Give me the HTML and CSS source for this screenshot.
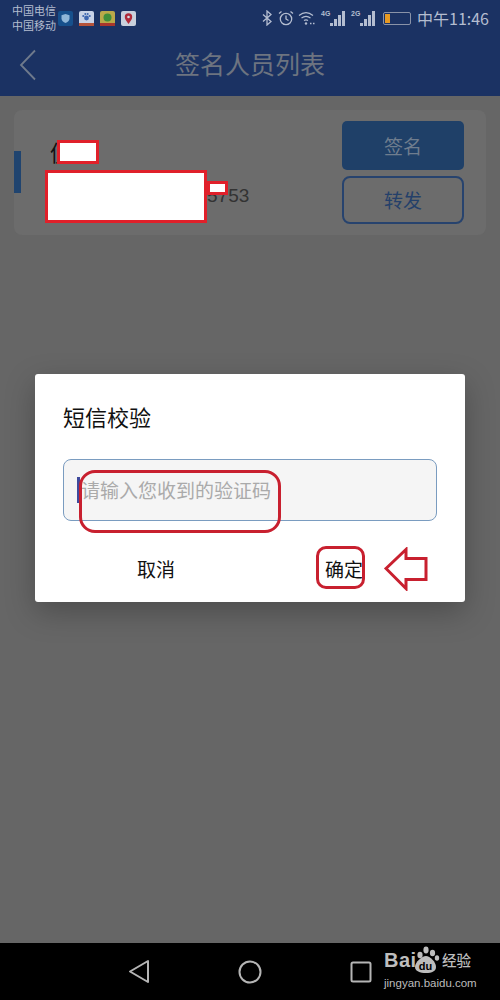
FILE: index.html
```html
<!DOCTYPE html>
<html lang="zh-CN">
<head>
  <meta charset="UTF-8" />
  <meta name="viewport" content="width=device-width, initial-scale=1.0" />
  <title>签名人员列表</title>
  <link rel="stylesheet" href="styles.css">
</head>
<body>
  <div class="phone">
    <header class="top-bar">
      <div class="status-bar">
        <div class="carrier"><span>中国电信</span><span>中国移动</span></div>
        <div class="app-icons">
          <svg width="15" height="15" viewBox="0 0 15 15"><rect width="15" height="15" rx="2" fill="#17508c"/><path d="M7.500 3l4 1.300v3.200c0 2.300-1.800 3.700-4 4.500-2.200-.8-4-2.200-4-4.500V4.300z" fill="#8fb6d8"/></svg>
          <svg width="15" height="15" viewBox="0 0 15 15"><rect width="15" height="15" rx="2" fill="#c9d3e6"/><circle cx="7.500" cy="7" r="2.400" fill="#3e66b0"/><circle cx="4.300" cy="5" r="1.100" fill="#3e66b0"/><circle cx="10.700" cy="5" r="1.100" fill="#3e66b0"/><circle cx="6.300" cy="3" r="1" fill="#3e66b0"/><circle cx="8.700" cy="3" r="1" fill="#3e66b0"/><rect y="12" width="15" height="3" fill="#b5533a"/></svg>
          <svg width="15" height="15" viewBox="0 0 15 15"><rect width="15" height="15" rx="2" fill="#b9a94a"/><circle cx="7.500" cy="6.500" r="4" fill="#3f8f3a"/><rect y="12" width="15" height="3" fill="#a8362c"/></svg>
          <svg width="15" height="15" viewBox="0 0 15 15"><rect width="15" height="15" rx="2" fill="#c9d0dc"/><path d="M7.500 13C5.500 10 3.800 8.300 3.800 6a3.700 3.700 0 0 1 7.400 0c0 2.300-1.700 4-3.700 7z" fill="#b02a3a"/><circle cx="7.500" cy="6" r="1.300" fill="#d8dce4"/></svg>
        </div>
        <div class="sys-icons">
          <svg width="10" height="16" viewBox="0 0 10 16" fill="none" stroke="#b4bdd0" stroke-width="1.300"><path d="M1 4.500l8 7-4 3.500V1l4 3.500-8 7"/></svg>
          <svg class="alarm" width="16" height="16" viewBox="0 0 16 16" fill="none" stroke="#b4bdd0" stroke-width="1.300"><circle cx="8" cy="9" r="5.700"/><path d="M8 5.500V9l2.500 1.500M1 3.500L3.500 1.500M15 3.500l-2.500-2"/></svg>
          <svg class="wifi" width="18" height="15" viewBox="0 0 18 15" fill="none" stroke="#b4bdd0" stroke-width="1.200"><path d="M1 4.500C5.500.8 10.500.8 15 4.500M3.500 7c3-2.300 6-2.300 9 0M6 9.500c1.500-1 2.500-1 4 0"/><circle cx="8" cy="12.500" r="1.200" fill="#b4bdd0" stroke="none"/><path d="M12 12.500h1.500M15 12.500h1.500" stroke-width="1.500"/></svg>
          <span class="signal"><small>4G</small><i class="b1"></i><i class="b2"></i><i class="b3"></i><i class="b4"></i></span>
          <span class="signal"><small>2G</small><i class="b1"></i><i class="b2"></i><i class="b3"></i><i class="b4"></i></span>
          <span class="battery"><i></i></span>
          <span class="clock">中午11:46</span>
        </div>
      </div>
      <div class="title-bar">
        <svg class="back" width="18" height="32" viewBox="0 0 18 32" fill="none" stroke="#6f7a8c" stroke-width="1.800"><path d="M16 1.500L2 16l14 14.500"/></svg>
        <h1>签名人员列表</h1>
      </div>
    </header>

    <main class="content">
      <section class="card">
        <div class="card-mark"></div>
        <div class="card-info">
          <div class="name">倪</div>
          <div class="phone-no">5753</div>
        </div>
        <div class="card-btns">
          <button class="btn btn-solid">签名</button>
          <button class="btn btn-line">转发</button>
        </div>
      </section>
    </main>

    <nav class="nav-bar">
      <svg width="22" height="25" viewBox="0 0 22 25" fill="none" stroke="#b5b5b5" stroke-width="2" stroke-linejoin="round"><path d="M20 2v21L2 12.500z"/></svg>
      <svg width="24" height="24" viewBox="0 0 24 24" fill="none" stroke="#b5b5b5" stroke-width="2"><circle cx="12" cy="12" r="10.500"/></svg>
      <svg width="22" height="22" viewBox="0 0 22 22" fill="none" stroke="#b5b5b5" stroke-width="2"><rect x="1.500" y="1.500" width="19" height="19" rx="1.500"/></svg>
    </nav>

    <!-- dialog over the dimmed page -->
    <div class="dialog">
      <h2>短信校验</h2>
      <div class="code-input"><span class="caret"></span><span class="hint">请输入您收到的验证码</span></div>
      <div class="dialog-btns">
        <button class="link-btn">取消</button>
        <button class="link-btn">确定</button>
      </div>
    </div>

    <!-- red marks drawn on the screenshot -->
    <div class="mask mask-name"></div>
    <div class="mask mask-info"></div>
    <div class="mask mask-tail"></div>
    <div class="ring ring-input"></div>
    <div class="ring ring-ok"></div>
    <svg class="arrow" width="44" height="44" viewBox="0 0 44 44" fill="#fff" stroke="#c8202f" stroke-width="3"><path d="M2 21.500L22 2.500v9h20v21H22v9z"/></svg>

    <div class="watermark">
      <div class="wm-top">
        <span class="wm-bai">Bai</span>
        <svg width="28" height="28" viewBox="0 0 28 28"><g fill="#bdbdbd"><ellipse cx="8" cy="9" rx="2.600" ry="3.200"/><ellipse cx="14" cy="4" rx="2.600" ry="3.400"/><ellipse cx="20.500" cy="7" rx="2.600" ry="3.200"/><ellipse cx="25" cy="12" rx="2.200" ry="2.700"/><path d="M14 10c4 0 10 6 10 11 0 4-4 6-10 6S3 25 3 21c0-5 7-11 11-11z"/></g><text x="13.500" y="24" class="wm-du">du</text></svg>
        <span class="wm-jy">经验</span>
      </div>
      <div class="wm-url">jingyan.baidu.com</div>
    </div>
  </div>
</body>
</html>
```

FILE: styles.css
```css
* {
  box-sizing: border-box;
}
body {
  margin: 0;
  font-family: "Noto Sans CJK SC", "Liberation Sans", sans-serif;
}
.phone {
  position: relative;
  width: 500px;
  height: 1000px;
  display: flex;
  flex-direction: column;
  overflow: hidden;
  background: #666;
}
/* Top bar */
.top-bar {
  height: 96px;
  background: #1b3263;
  display: flex;
  flex-direction: column;
}
.status-bar {
  height: 34px;
  padding: 2px 11px 0 12px;
  display: flex;
  align-items: center;
  color: #b4bdd0;
}
.carrier {
  display: flex;
  flex-direction: column;
  font-size: 11px;
  line-height: 15px;
  width: 46px;
}
.app-icons {
  display: flex;
  gap: 6px;
}
.sys-icons {
  margin-left: auto;
  display: flex;
  align-items: center;
}
.alarm {
  margin-left: 6px;
}
.wifi {
  margin-left: 4px;
}
.signal {
  display: flex;
  align-items: flex-end;
  height: 16px;
  margin-left: 5px;
}
.signal + .signal {
  margin-left: 6px;
}
.signal small {
  font-size: 7px;
  line-height: 8px;
  width: 8px;
  align-self: flex-start;
  font-family: "Liberation Sans", sans-serif;
  font-weight: bold;
}
.signal i {
  width: 3px;
  margin-left: 1px;
  background: #b4bdd0;
}
.signal .b1 { height: 3px; }
.signal .b2 { height: 7px; }
.signal .b3 { height: 11px; }
.signal .b4 { height: 15px; }
.battery {
  width: 28px;
  height: 13px;
  margin-left: 8px;
  border: 1px solid #8a93a8;
  border-radius: 2px;
  padding: 1px;
}
.battery i {
  display: block;
  width: 5px;
  height: 9px;
  background: #e89a22;
}
.clock {
  margin-left: 6px;
  font-size: 16px;
  line-height: 18px;
}
.title-bar {
  flex: 1;
  position: relative;
  display: flex;
  align-items: center;
  justify-content: center;
  padding-bottom: 4px;
}
.title-bar h1 {
  margin: 0;
  font-size: 25px;
  font-weight: 400;
  color: #6d7480;
}
.back {
  position: absolute;
  left: 19px;
  top: 15px;
}
/* Page content */
.content {
  flex: 1;
  padding: 14px;
}
.card {
  height: 125px;
  background: #6c6c6c;
  border-radius: 8px;
  display: flex;
  align-items: center;
  padding-right: 22px;
}
.card-mark {
  width: 7px;
  height: 42px;
  margin-top: -1px;
  background: #20446f;
}
.card-info {
  flex: 1;
  padding: 4px 0 0 29px;
}
.name {
  font-size: 22px;
  line-height: 30px;
  margin-top: -6px;
  color: #111;
}
.phone-no {
  margin: 18px 0 0 157px;
  font-size: 19px;
  line-height: 24px;
  color: #333;
  font-family: "Liberation Sans", sans-serif;
}
.card-btns {
  display: flex;
  flex-direction: column;
  gap: 6px;
  margin-top: -1px;
}
.btn {
  width: 122px;
  height: 48px;
  border-radius: 5px;
  font-family: inherit;
  font-size: 19px;
  padding: 0;
}
.btn-solid {
  height: 49px;
  background: #1f4068;
  border: none;
  color: #6f7d8e;
}
.btn-line {
  background: transparent;
  border: 2px solid #27436e;
  border-radius: 8px;
  color: #24406a;
}
.nav-bar {
  height: 57px;
  background: #000;
  display: flex;
  align-items: center;
  justify-content: center;
  gap: 88px;
}
/* Dialog */
.dialog {
  position: absolute;
  left: 35px;
  top: 374px;
  width: 430px;
  height: 228px;
  background: #fff;
  border-radius: 3px;
  box-shadow: 0 10px 30px rgba(0, 0, 0, 0.25);
  padding: 27px 28px 0;
}
.dialog h2 {
  margin: 0;
  font-size: 22px;
  line-height: 30px;
  font-weight: 400;
  color: #111;
}
.code-input {
  margin-top: 28px;
  height: 62px;
  background: #f5f5f5;
  border: 1px solid #7a9cc0;
  border-radius: 8px;
  display: flex;
  align-items: center;
  padding-left: 13px;
}
.caret {
  width: 3px;
  height: 26px;
  background: #3f4a9c;
  margin-right: 1px;
}
.hint {
  font-size: 19px;
  line-height: 26px;
  color: #aaa;
}
.dialog-btns {
  display: flex;
  justify-content: space-between;
  margin-top: 34px;
  padding: 0 74px;
}
.link-btn {
  background: none;
  border: none;
  padding: 0;
  font-family: inherit;
  font-size: 19px;
  line-height: 28px;
  color: #111;
}
/* Annotations */
.mask {
  position: absolute;
  background: #fff;
  border: 3px solid #e0202a;
}
.mask-name { left: 57px; top: 140px; width: 42px; height: 24px; }
.mask-info { left: 45px; top: 170px; width: 162px; height: 53px; }
.mask-tail { left: 207px; top: 181px; width: 21px; height: 14px; }
.ring {
  position: absolute;
  border: 3px solid #c8202f;
}
.ring-input { left: 79px; top: 470px; width: 202px; height: 63px; border-radius: 16px; }
.ring-ok { left: 316px; top: 546px; width: 49px; height: 43px; border-radius: 10px; }
.arrow {
  position: absolute;
  left: 384px;
  top: 547px;
}
/* Watermark */
.watermark {
  position: absolute;
  left: 384px;
  top: 946px;
  color: #bdbdbd;
}
.wm-top {
  display: flex;
  align-items: flex-end;
  height: 28px;
  margin-bottom: 3px;
}
.wm-bai {
  font-family: "Liberation Sans", sans-serif;
  font-weight: bold;
  font-size: 20px;
  line-height: 24px;
  width: 28px;
  letter-spacing: 0.500px;
  margin-bottom: 2px;
}
.wm-du {
  font-family: "Liberation Sans", sans-serif;
  font-size: 11px;
  font-weight: bold;
  fill: #000;
  text-anchor: middle;
}
.wm-jy {
  font-size: 14.500px;
  font-weight: 500;
  line-height: 24px;
  margin-left: 2px;
  margin-bottom: 2px;
}
.wm-url {
  font-family: "Liberation Sans", sans-serif;
  font-size: 11.500px;
  line-height: 12px;
  white-space: nowrap;
}
```
